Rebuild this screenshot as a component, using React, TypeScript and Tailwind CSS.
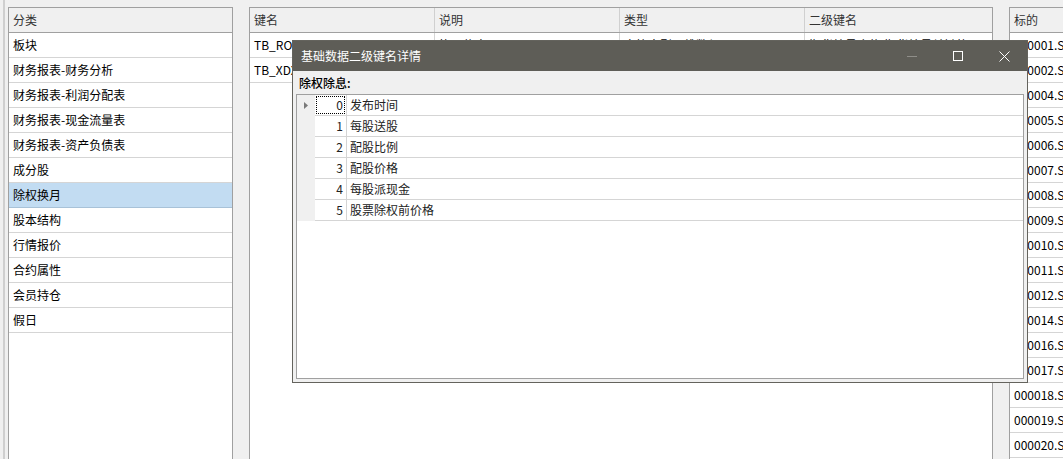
import React from "react";

const leftRows = [
  "板块",
  "财务报表-财务分析",
  "财务报表-利润分配表",
  "财务报表-现金流量表",
  "财务报表-资产负债表",
  "成分股",
  "除权换月",
  "股本结构",
  "行情报价",
  "合约属性",
  "会员持仓",
  "假日",
];

const midRows = [
  ["TB_ROLLOVER", "换月信息", "字符串型一维数组", "期货编号合约;期货编号关键格"],
  ["TB_XDXR", "除权除息", "二维数组", "发布时间;每股送股;配股比例"],
];

const codes = [
  "000001", "000002", "000004", "000005", "000006", "000007", "000008", "000009",
  "000010", "000011", "000012", "000014", "000016", "000017", "000018", "000019",
  "000020", "000021",
];

const detailRows = ["发布时间", "每股送股", "配股比例", "配股价格", "每股派现金", "股票除权前价格"];

export default function App() {
  return (
    <div className="relative w-[1063px] h-[459px] overflow-hidden bg-[#f0f0f0] flex text-[12px] leading-none text-black font-['Noto_Sans_CJK_SC','Noto_Sans',sans-serif]">
      {/* left splitter strip */}
      <div className="w-[8px] flex-none flex">
        <div className="ml-[3px] w-[2px] bg-[#cfcfcf]" />
      </div>

      {/* left grid */}
      <div className="mt-[7px] w-[225px] flex-none border-x border-t border-[#a0a0a0] bg-white flex flex-col">
        <div className="h-[25px] flex-none border-b border-[#a0a0a0] bg-[#f0f0f0] flex items-center pl-[4px] pb-[1px] text-[#333]">
          分类
        </div>
        {leftRows.map((r) => {
          const sel = r === "除权换月";
          return (
            <div
              key={r}
              className={
                sel
                  ? "h-[25px] flex-none border-b border-[#a8c2d8] bg-[#c2dcf2] flex items-center pl-[4px] pb-[1px]"
                  : "h-[25px] flex-none border-b border-[#d5d5d5] flex items-center pl-[4px] pb-[1px]"
              }
            >
              {r}
            </div>
          );
        })}
      </div>

      <div className="w-[16px] flex-none" />

      {/* middle grid */}
      <div className="mt-[7px] w-[744px] flex-none border-x border-t border-[#a0a0a0] bg-white flex flex-col">
        <div className="h-[25px] flex-none border-b border-[#a0a0a0] bg-[#f0f0f0] flex text-[#333]">
          <div className="w-[185px] flex-none border-r border-[#d0d0d0] flex items-center pl-[4px] pb-[1px]">键名</div>
          <div className="w-[185px] flex-none border-r border-[#d0d0d0] flex items-center pl-[4px] pb-[1px]">说明</div>
          <div className="w-[185px] flex-none border-r border-[#d0d0d0] flex items-center pl-[4px] pb-[1px]">类型</div>
          <div className="flex-1 flex items-center pl-[4px] pb-[1px]">二级键名</div>
        </div>
        {midRows.map((r) => (
          <div key={r[0]} className="h-[25px] flex-none border-b border-[#d5d5d5] flex">
            <div className="w-[185px] flex-none border-r border-[#d5d5d5] flex items-center pl-[4px] pb-[1px] overflow-hidden whitespace-nowrap">{r[0]}</div>
            <div className="w-[185px] flex-none border-r border-[#d5d5d5] flex items-center pl-[4px] pb-[1px] overflow-hidden whitespace-nowrap">{r[1]}</div>
            <div className="w-[185px] flex-none border-r border-[#d5d5d5] flex items-center pl-[4px] pb-[1px] overflow-hidden whitespace-nowrap">{r[2]}</div>
            <div className="flex-1 flex items-center pl-[4px] pb-[1px] overflow-hidden whitespace-nowrap">{r[3]}</div>
          </div>
        ))}
      </div>

      <div className="w-[16px] flex-none" />

      {/* right grid */}
      <div className="mt-[7px] flex-1 border-l border-t border-[#a0a0a0] bg-white flex flex-col">
        <div className="h-[25px] flex-none border-b border-[#a0a0a0] bg-[#f0f0f0] flex items-center pl-[4px] pb-[1px] text-[#333]">
          标的
        </div>
        {codes.map((c) => (
          <div key={c} className="h-[25px] flex-none border-b border-[#d5d5d5] flex items-center pl-[4px] pb-[1px] whitespace-nowrap overflow-hidden">
            {c}.SZ
          </div>
        ))}
      </div>

      {/* dialog */}
      <div className="absolute left-[292px] top-[40px] w-[736px] h-[343px] border border-[#64635d] bg-[#f0f0f0] flex flex-col">
        <div className="h-[30px] flex-none bg-[#5e5d57] flex items-center">
          <div className="flex-1 pl-[8px] text-white">基础数据二级键名详情</div>
          <div className="w-[46px] h-full flex items-center justify-center">
            <div className="w-[10px] h-[1px] bg-[#8f8e89]" />
          </div>
          <div className="w-[46px] h-full flex items-center justify-center">
            <div className="w-[10px] h-[10px] border border-white" />
          </div>
          <div className="w-[46px] h-full flex items-center justify-center">
            <svg width="11" height="11" viewBox="0 0 11 11">
              <path d="M0.5 0.5 L10.5 10.5 M10.5 0.5 L0.5 10.5" stroke="#ffffff" strokeWidth="1" fill="none" />
            </svg>
          </div>
        </div>
        <div className="flex-1 flex flex-col pl-[3px] pr-[3px] pb-[3px]">
          <div className="h-[23px] flex-none flex items-center pl-[3px] font-medium text-black">除权除息:</div>
          <div className="flex-1 border border-[#a0a0a0] bg-white flex flex-col">
            {detailRows.map((t, i) => (
              <div key={t} className="h-[21px] flex-none flex">
                <div className="w-[18px] flex-none bg-[#f0f0f0] flex items-center justify-center">
                  {i === 0 && (
                    <svg width="4" height="7" viewBox="0 0 4 7">
                      <path d="M0 0 L4 3.5 L0 7 Z" fill="#7a7a7a" />
                    </svg>
                  )}
                </div>
                <div className="flex-1 flex border-b border-[#d5d5d5]">
                  <div className="relative w-[32px] flex-none border-r border-[#d5d5d5] flex items-center justify-end pr-[3px] text-[#222]">
                    {i === 0 && <span className="absolute inset-[1px] border border-dotted border-black" />}
                    {i}
                  </div>
                  <div className="flex-1 flex items-center pl-[3px] text-[#222]">{t}</div>
                </div>
              </div>
            ))}
          </div>
        </div>
      </div>
    </div>
  );
}
